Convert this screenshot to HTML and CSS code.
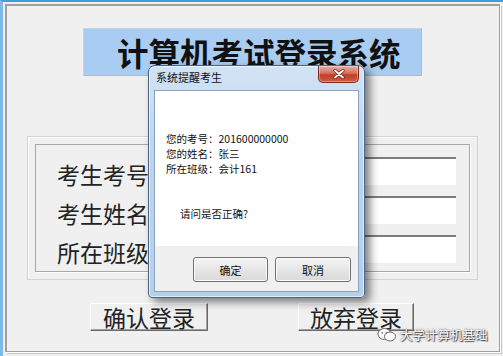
FILE: index.html
```html
<!DOCTYPE html>
<html lang="zh-CN">
<head>
<meta charset="utf-8">
<title>计算机考试登录系统</title>
<link rel="stylesheet" href="styles.css">
</head>
<body>
<div class="window">
  <div class="client">
    <div class="title">计算机考试登录系统</div>
    <div class="panel">
      <div class="panel-inner">
        <div class="row"><span class="label">考生考号</span><span class="input"></span></div>
        <div class="row"><span class="label">考生姓名</span><span class="input"></span></div>
        <div class="row"><span class="label">所在班级</span><span class="input"></span></div>
      </div>
    </div>
    <div class="actions">
      <button class="btn btn-ok">确认登录</button>
      <button class="btn btn-cancel">放弃登录</button>
    </div>
  </div>

  <div class="dialog">
    <div class="dialog-title">系统提醒考生</div>
    <div class="close">
      <svg width="12" height="10" viewBox="0 0 12 10"><path d="M2 1.5 L10 8.5 M10 1.5 L2 8.5" stroke="#6b1c12" stroke-width="3.2" stroke-linecap="round"/><path d="M2 1.5 L10 8.5 M10 1.5 L2 8.5" stroke="#ffffff" stroke-width="1.8" stroke-linecap="round"/></svg>
    </div>
    <div class="dialog-body">
      <div class="msg">
        <div>您的考号：201600000000</div>
        <div>您的姓名：张三</div>
        <div>所在班级：会计161</div>
        <div class="question">请问是否正确?</div>
      </div>
      <div class="dialog-actions">
        <button class="dbtn">确定</button>
        <button class="dbtn dbtn-wide">取消</button>
      </div>
    </div>
  </div>

  <div class="watermark">
    <svg width="20" height="16" viewBox="0 0 20 16">
      <ellipse cx="7.5" cy="7" rx="6.5" ry="5.5" fill="#ffffff" stroke="#666" stroke-width="1"/>
      <ellipse cx="13" cy="9.5" rx="5.5" ry="4.5" fill="#ffffff" stroke="#666" stroke-width="1"/>
      <circle cx="5.3" cy="5.8" r="0.9" fill="#777"/>
      <circle cx="9.3" cy="5.8" r="0.9" fill="#777"/>
    </svg>
    <span class="wm-text">大学计算机基础</span>
  </div>
</div>
</body>
</html>
```
FILE: styles.css
```css
* { box-sizing: border-box; }

body {
  margin: 0;
  background: #f0f0f0;
  font-family: "Noto Sans CJK SC", "Noto Sans", sans-serif;
}

.window {
  position: relative;
  width: 503px;
  height: 356px;
  background: #f0f0f0;
  border-top: 2px solid #3f9de2;
  border-left: 3px solid #7bbbeb;
  padding: 2px 3px 4px 2px;
  overflow: hidden;
}

.client {
  height: 100%;
  border-top: 2px solid #a0a0a0;
  border-left: 2px solid #a0a0a0;
  border-right: 1px solid #a0a0a0;
  border-bottom: 1px solid #a0a0a0;
  box-shadow: 1px 1px 0 #ffffff, 2px 2px 0 #c8c8c8;
}

.title {
  margin: 22px 0 0 76px;
  width: 339px;
  height: 48px;
  background: #a9cdf2;
  border: 1px solid #c4d4e4;
  border-right-color: #b0bcc8;
  border-bottom-color: #b0bcc8;
  padding-left: 33px;
  font-size: 31.5px;
  font-weight: 700;
  line-height: 46px;
  color: #111;
  white-space: nowrap;
}

.panel {
  margin: 60px 0 0 20px;
  width: 451px;
  height: 144px;
  border: 1px solid #d2d2d2;
  box-shadow: inset 1px 1px 0 #ffffff;
  padding: 7px;
}

.panel-inner {
  height: 100%;
  border: 1px solid #a8a8a8;
  box-shadow: 1px 1px 0 #ffffff;
  padding: 12px 13px 0 21px;
  display: flex;
  flex-direction: column;
  gap: 11px;
}

.row {
  display: flex;
  align-items: flex-start;
  height: 28px;
}

.label {
  width: 93px;
  margin-top: 3px;
  font-size: 23px;
  line-height: 28px;
  color: #222;
  white-space: nowrap;
}

.input {
  flex: 1;
  height: 28px;
  background: #ffffff;
  border-top: 2px solid #7c7c7c;
  border-left: 2px solid #7c7c7c;
}

.actions {
  margin: 23px 0 0 83px;
  display: flex;
  gap: 90px;
}

.btn {
  width: 118px;
  height: 28px;
  padding: 0;
  background: #f0f0f0;
  border: 1px solid;
  border-color: #ffffff #696969 #696969 #ffffff;
  box-shadow: inset -1px -1px 0 #a0a0a0;
  font-family: "Noto Sans CJK SC", sans-serif;
  font-size: 23px;
  line-height: 24px;
  color: #222;
}

.btn-cancel { width: 116px; }

.dialog {
  position: absolute;
  left: 145px;
  top: 63px;
  width: 217px;
  height: 233px;
  border: 1px solid #4d6482;
  border-radius: 7px 7px 4px 4px;
  background: linear-gradient(#d2e3f4, #bcd3ec 40%, #b6cfea);
  padding: 0 5px 5px;
  box-shadow: 5px 4px 9px rgba(0, 0, 0, 0.5), inset 0 0 0 1px rgba(255, 255, 255, 0.6);
  display: flex;
  flex-direction: column;
}

.dialog-title {
  height: 24px;
  padding: 1px 0 0 2px;
  font-size: 11px;
  line-height: 20px;
  color: #111;
}

.close {
  position: absolute;
  top: 0;
  right: 5px;
  width: 41px;
  height: 17px;
  border: 1px solid #7b2a1e;
  border-top: none;
  border-radius: 0 0 5px 5px;
  background: linear-gradient(#eab0a3, #d8705b 45%, #c23f28 55%, #cd5a42);
  box-shadow: inset 0 0 0 1px rgba(255, 255, 255, 0.35);
  display: flex;
  align-items: center;
  justify-content: center;
}

.dialog-body {
  flex: 1;
  border: 1px solid #8aa3c2;
  background: #f0f0f0;
  display: flex;
  flex-direction: column;
}

.msg {
  height: 155px;
  background: #ffffff;
  padding: 40px 0 0 11px;
  font-size: 10.5px;
  line-height: 15px;
  color: #111;
}

.question {
  margin: 30px 0 0 14px;
}

.dialog-actions {
  flex: 1;
  display: flex;
  justify-content: flex-end;
  gap: 7px;
  padding: 11px 7px 0 0;
}

.dbtn {
  width: 75px;
  height: 25px;
  padding: 0;
  border: 1px solid #707070;
  border-radius: 3px;
  background: linear-gradient(#f5f5f5, #e6e6e6 50%, #d9d9d9);
  box-shadow: inset 0 0 0 1px #fbfbfb;
  font-family: "Noto Sans CJK SC", sans-serif;
  font-size: 11px;
  color: #111;
}

.dbtn-wide { width: 76px; }

.watermark {
  position: absolute;
  left: 374px;
  top: 325px;
  display: flex;
  align-items: center;
  gap: 3px;
}

.wm-text {
  font-size: 12.5px;
  line-height: 16px;
  color: #ffffff;
  text-shadow: 0 0 2px #333, 1px 1px 1px #444;
  white-space: nowrap;
}
```
